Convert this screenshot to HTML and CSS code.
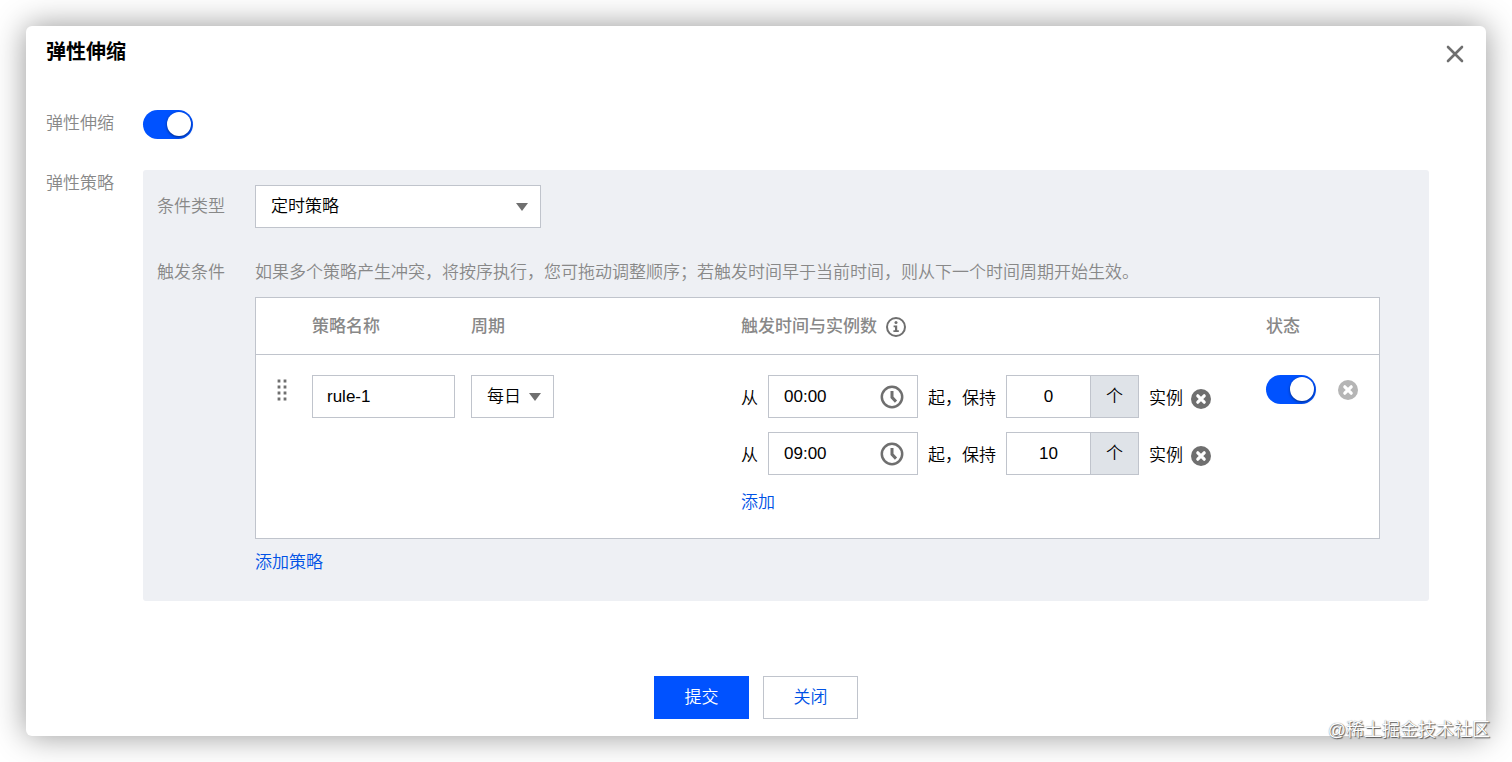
FILE: index.html
```html
<!DOCTYPE html>
<html lang="zh-CN">

<head>
    <meta charset="UTF-8">
    <meta name="viewport" content="width=device-width, initial-scale=1.0">
    <title>弹性伸缩</title>
    <link rel="stylesheet" href="styles.css">
</head>

<body>
    <!-- Icons used more than once -->
    <svg class="sprite" aria-hidden="true">
        <symbol id="icon-clock" viewBox="0 0 24 24">
            <circle cx="12" cy="12" r="10.2" fill="none" stroke="currentColor" stroke-width="2.5" />
            <path d="M12 6V12.4L16 16.6" fill="none" stroke="currentColor" stroke-width="3" />
        </symbol>
        <symbol id="icon-remove" viewBox="0 0 20 20">
            <circle cx="10" cy="10" r="10" fill="currentColor" />
            <path d="M6.8 6.8L13.2 13.2M13.2 6.8L6.8 13.2" fill="none" stroke="#fff" stroke-width="3.2" stroke-linecap="round" />
        </symbol>
    </svg>

    <div class="dialog" role="dialog" aria-labelledby="dialog-title">
        <div class="dialog-header">
            <h2 id="dialog-title">弹性伸缩</h2>
            <button type="button" class="icon-btn close-btn" aria-label="关闭">
                <svg width="18" height="18" viewBox="0 0 18 18">
                    <path d="M2 2L16 16M16 2L2 16" fill="none" stroke="currentColor" stroke-width="2.6" stroke-linecap="round" />
                </svg>
            </button>
        </div>

        <form>
            <div class="dialog-body">
                <div class="form-row">
                    <label class="form-label" for="scaling">弹性伸缩</label>
                    <input type="checkbox" class="switch" id="scaling" checked>
                </div>

                <div class="form-row">
                    <span class="form-label">弹性策略</span>

                    <!-- Policy Panel -->
                    <div class="panel">
                        <div class="panel-row panel-row-center">
                            <label class="panel-label" for="condition-type">条件类型</label>
                            <div class="select-box select-type">
                                <select id="condition-type" name="condition-type">
                                    <option>定时策略</option>
                                </select>
                            </div>
                        </div>

                        <div class="panel-row">
                            <span class="panel-label">触发条件</span>
                            <div class="panel-content">
                                <p class="hint">如果多个策略产生冲突，将按序执行，您可拖动调整顺序；若触发时间早于当前时间，则从下一个时间周期开始生效。</p>

                                <table class="rules">
                                    <colgroup>
                                        <col class="col-drag">
                                        <col class="col-name">
                                        <col class="col-cycle">
                                        <col>
                                        <col class="col-status">
                                        <col class="col-remove">
                                    </colgroup>
                                    <thead>
                                        <tr>
                                            <th></th>
                                            <th>策略名称</th>
                                            <th>周期</th>
                                            <th>
                                                <div class="th-info">
                                                    触发时间与实例数
                                                    <svg width="20" height="20" viewBox="0 0 20 20">
                                                        <circle cx="10" cy="10" r="9" fill="none" stroke="currentColor" stroke-width="2" />
                                                        <circle cx="10" cy="5.6" r="1.5" fill="currentColor" />
                                                        <path d="M7.6 8.4H11.2V13.2H12.8V15H7.4V13.2H9V10.2H7.6Z" fill="currentColor" />
                                                    </svg>
                                                </div>
                                            </th>
                                            <th>状态</th>
                                            <th></th>
                                        </tr>
                                    </thead>
                                    <tbody>
                                        <tr>
                                            <td>
                                                <button type="button" class="icon-btn drag-btn" aria-label="拖动">
                                                    <svg width="10" height="22" viewBox="0 0 10 22">
                                                        <path d="M2 .6V3.4M8 .6V3.4M2 6.6V9.4M8 6.6V9.4M2 12.6V15.4M8 12.6V15.4M2 18.6V21.4M8 18.6V21.4" fill="none" stroke="currentColor" stroke-width="2.8" />
                                                    </svg>
                                                </button>
                                            </td>
                                            <td><input type="text" class="text-input" value="rule-1" aria-label="策略名称"></td>
                                            <td>
                                                <div class="select-box select-cycle">
                                                    <select aria-label="周期">
                                                        <option>每日</option>
                                                    </select>
                                                </div>
                                            </td>
                                            <td>
                                                <div class="triggers">
                                                    <div class="trigger">
                                                        <label class="word" for="time-1">从</label>
                                                        <div class="time-box">
                                                            <input type="text" id="time-1" value="00:00">
                                                            <svg width="24" height="24"><use href="#icon-clock" /></svg>
                                                        </div>
                                                        <label class="word" for="count-1">起，保持</label>
                                                        <div class="count-box">
                                                            <input type="text" id="count-1" value="0">
                                                            <span class="unit">个</span>
                                                        </div>
                                                        <div class="instance">
                                                            <span>实例</span>
                                                            <button type="button" class="icon-btn" aria-label="删除时间">
                                                                <svg width="20" height="20"><use href="#icon-remove" /></svg>
                                                            </button>
                                                        </div>
                                                    </div>
                                                    <div class="trigger">
                                                        <label class="word" for="time-2">从</label>
                                                        <div class="time-box">
                                                            <input type="text" id="time-2" value="09:00">
                                                            <svg width="24" height="24"><use href="#icon-clock" /></svg>
                                                        </div>
                                                        <label class="word" for="count-2">起，保持</label>
                                                        <div class="count-box">
                                                            <input type="text" id="count-2" value="10">
                                                            <span class="unit">个</span>
                                                        </div>
                                                        <div class="instance">
                                                            <span>实例</span>
                                                            <button type="button" class="icon-btn" aria-label="删除时间">
                                                                <svg width="20" height="20"><use href="#icon-remove" /></svg>
                                                            </button>
                                                        </div>
                                                    </div>
                                                    <a class="link" href="#">添加</a>
                                                </div>
                                            </td>
                                            <td><input type="checkbox" class="switch" aria-label="状态" checked></td>
                                            <td>
                                                <button type="button" class="icon-btn remove-rule" aria-label="删除策略">
                                                    <svg width="20" height="20"><use href="#icon-remove" /></svg>
                                                </button>
                                            </td>
                                        </tr>
                                    </tbody>
                                </table>

                                <a class="link" href="#">添加策略</a>
                            </div>
                        </div>
                    </div>
                </div>
            </div>

            <div class="dialog-footer">
                <button type="submit" class="btn btn-primary">提交</button>
                <button type="button" class="btn">关闭</button>
            </div>
        </form>

        <span class="watermark">@稀土掘金技术社区</span>
    </div>
</body>

</html>
```

FILE: styles.css
```css
/* General Styling */
* {
    box-sizing: border-box;
}

body {
    margin: 0;
    background-color: #fff;
    color: #000;
    font-family: "Liberation Sans", "Noto Sans CJK SC", sans-serif;
    font-size: 17px;
    font-weight: 350;
    line-height: 28px;
}

input,
select,
button {
    margin: 0;
    padding: 0;
    border: none;
    background: none;
    color: inherit;
    font: inherit;
}

.sprite {
    position: absolute;
    width: 0;
    height: 0;
}

svg {
    display: block;
}

/* Dialog */
.dialog {
    position: relative;
    margin: 26px;
    background-color: #fff;
    border-radius: 6px;
    box-shadow: 0 0 32px rgba(0, 0, 0, 0.42);
}

.dialog-header {
    display: flex;
    align-items: center;
    justify-content: space-between;
    padding: 12px 22px 0 20px;
}

.dialog-header h2 {
    margin: 0;
    font-size: 20px;
    font-weight: bold;
}

.dialog-body {
    display: flex;
    flex-direction: column;
    gap: 31px;
    padding: 44px 57px 75px 20px;
}

.dialog-footer {
    display: flex;
    justify-content: center;
    gap: 14px;
    padding-bottom: 17px;
}

.form-row,
.panel-row {
    display: flex;
    align-items: flex-start;
}

.form-label {
    flex: 0 0 97px;
    color: #888;
}

/* Policy Panel */
.panel {
    flex: 1;
    display: flex;
    flex-direction: column;
    gap: 31px;
    padding: 15px 49px 24px 14px;
    background-color: #eef0f4;
    border-radius: 3px;
}

.panel-row-center {
    align-items: center;
}

.panel-label {
    flex: 0 0 98px;
    color: #888;
}

.panel-content {
    flex: 1;
}

.hint {
    margin: 0 0 10px;
    color: #888;
}

/* Rules Table */
.rules {
    width: 100%;
    margin-bottom: 10px;
    table-layout: fixed;
    border-spacing: 0;
    border: 1px solid #c0c4cc;
    background-color: #fff;
}

.col-drag {
    width: 56px;
}

.col-name {
    width: 159px;
}

.col-cycle {
    width: 270px;
}

.col-status {
    width: 72px;
}

.col-remove {
    width: 41px;
}

.rules th {
    height: 57px;
    padding: 1px 0 0;
    border-bottom: 1px solid #c0c4cc;
    color: #888;
    font-weight: 500;
    text-align: left;
}

.rules td {
    padding: 20px 0 21px;
    vertical-align: top;
}

.th-info {
    display: flex;
    align-items: center;
    gap: 9px;
}

.th-info svg {
    color: #6f6f6f;
}

/* Controls */
.text-input,
.select-box,
.time-box,
.count-box {
    height: 43px;
    border: 1px solid #c0c4cc;
    background-color: #fff;
}

.text-input {
    display: block;
    width: 143px;
    padding: 0 14px;
}

.select-box {
    position: relative;
}

.select-box::after {
    content: "";
    position: absolute;
    top: 17px;
    right: 12px;
    border: 6px solid transparent;
    border-top: 8px solid #6f6f6f;
    border-bottom: none;
    pointer-events: none;
}

.select-box select {
    width: 100%;
    height: 100%;
    padding-left: 15px;
    appearance: none;
}

.select-type {
    width: 286px;
}

.select-cycle {
    width: 83px;
}

.switch {
    display: block;
    width: 50px;
    height: 29px;
    padding: 2px;
    border-radius: 15px;
    background-color: #0052ff;
    appearance: none;
    cursor: pointer;
}

.switch::before {
    content: "";
    display: block;
    width: 24px;
    height: 24px;
    border-radius: 50%;
    background-color: #fff;
    box-shadow: 0 1px 3px rgba(0, 0, 0, 0.5);
}

.switch:checked::before {
    margin-left: auto;
}

.icon-btn {
    display: flex;
    align-items: center;
    color: #6f6f6f;
    cursor: pointer;
}

.close-btn {
    padding-top: 4px;
}

.drag-btn {
    height: 29px;
    margin-left: 21px;
}

.remove-rule {
    height: 29px;
    color: #b5b5b5;
}

/* Trigger Times */
.triggers {
    display: flex;
    flex-direction: column;
    align-items: flex-start;
    gap: 14px;
}

.trigger {
    display: flex;
    align-items: center;
    gap: 10px;
}

.word,
.instance {
    padding-top: 5px;
}

.instance {
    display: flex;
    align-items: center;
    gap: 8px;
}

.time-box {
    display: flex;
    align-items: center;
    width: 150px;
    padding: 0 13px 0 15px;
    color: #6f6f6f;
}

.time-box input {
    flex: 1;
    min-width: 0;
    color: #000;
}

.count-box {
    display: flex;
    width: 133px;
}

.count-box input {
    flex: 1;
    min-width: 0;
    text-align: center;
}

.unit {
    width: 48px;
    border-left: 1px solid #c0c4cc;
    background-color: #dfe3e8;
    line-height: 42px;
    text-align: center;
}

.link {
    display: block;
    color: #0052e6;
    text-decoration: none;
}

/* Footer Buttons */
.btn {
    width: 95px;
    height: 43px;
    border: 1px solid #c0c4cc;
    background-color: #fff;
    color: #0052e6;
    cursor: pointer;
}

.btn-primary {
    border-color: #0052ff;
    background-color: #0052ff;
    color: #fff;
}

.watermark {
    position: absolute;
    right: -4px;
    bottom: -8px;
    color: #fff;
    font-size: 18px;
    text-shadow: 1px 1px 1px #555, 0 0 1px #777;
}
```
